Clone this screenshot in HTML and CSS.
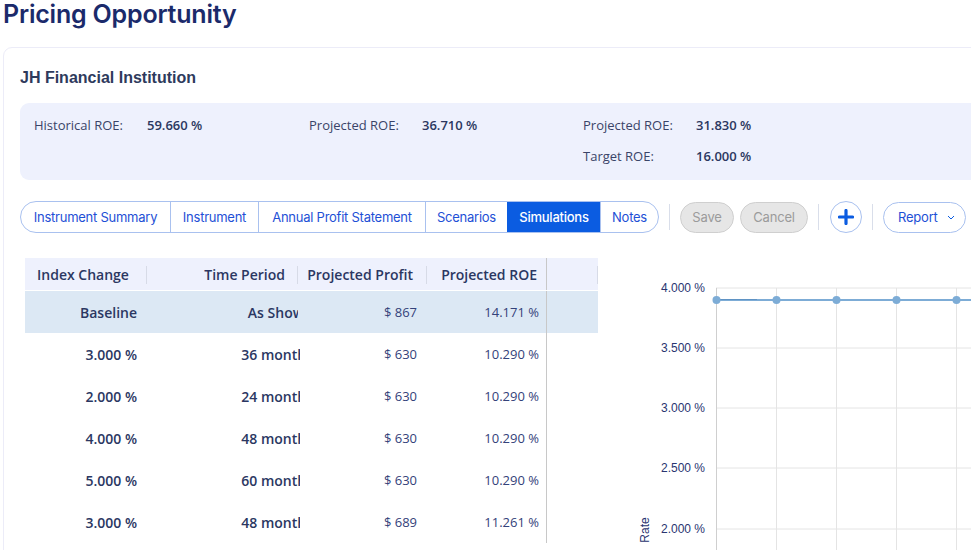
FILE: index.html
```html
<!DOCTYPE html>
<html lang="en">
<head>
<meta charset="utf-8">
<title>Pricing Opportunity</title>
<link rel="stylesheet" href="styles.css">
</head>
<body>
<h1 class="page-title">Pricing Opportunity</h1>
<section class="card">
  <h2 class="card-title">JH Financial Institution</h2>
  <div class="roe-panel">
    <div class="roe-col">
      <div class="roe-item"><span class="roe-label">Historical ROE:</span><span class="roe-value">59.660 %</span></div>
    </div>
    <div class="roe-col">
      <div class="roe-item"><span class="roe-label">Projected ROE:</span><span class="roe-value">36.710 %</span></div>
    </div>
    <div class="roe-col">
      <div class="roe-item"><span class="roe-label">Projected ROE:</span><span class="roe-value">31.830 %</span></div>
      <div class="roe-item"><span class="roe-label">Target ROE:</span><span class="roe-value">16.000 %</span></div>
    </div>
  </div>

  <div class="toolbar">
    <nav class="tabs">
      <span class="tab tab-summary">Instrument Summary</span>
      <span class="tab tab-instrument">Instrument</span>
      <span class="tab tab-annual">Annual Profit Statement</span>
      <span class="tab tab-scenarios">Scenarios</span>
      <span class="tab tab-sims active">Simulations</span>
      <span class="tab tab-notes">Notes</span>
    </nav>
    <span class="sep"></span>
    <button class="btn btn-disabled btn-save">Save</button>
    <button class="btn btn-disabled btn-cancel">Cancel</button>
    <span class="sep"></span>
    <button class="btn-round" aria-label="Add">
      <svg width="16" height="16" viewBox="0 0 16 16"><path d="M8 1.5v13M1.5 8h13" stroke="#0b5ce1" stroke-width="3.2" stroke-linecap="round"/></svg>
    </button>
    <span class="sep"></span>
    <button class="btn btn-outline">Report
      <svg class="chev" width="8" height="5" viewBox="0 0 8 5"><path d="M1 1l3 3 3-3" fill="none" stroke="#0b5ce1" stroke-width="1"/></svg>
    </button>
  </div>

  <div class="content">
    <div class="grid-table">
      <div class="th left">Index Change</div>
      <div class="th">Time Period</div>
      <div class="th">Projected Profit</div>
      <div class="th pin">Projected ROE</div>
      <div class="th last"></div>

      <div class="td b sel">Baseline</div>
      <div class="td b sel clip"><span>As Shown</span></div>
      <div class="td sel c3">$ 867</div>
      <div class="td sel pin c4">14.171 %</div>
      <div class="td sel last"></div>

      <div class="td b">3.000 %</div>
      <div class="td b clip"><span>36 months</span></div>
      <div class="td c3">$ 630</div>
      <div class="td pin c4">10.290 %</div>
      <div class="td last"></div>

      <div class="td b">2.000 %</div>
      <div class="td b clip"><span>24 months</span></div>
      <div class="td c3">$ 630</div>
      <div class="td pin c4">10.290 %</div>
      <div class="td last"></div>

      <div class="td b">4.000 %</div>
      <div class="td b clip"><span>48 months</span></div>
      <div class="td c3">$ 630</div>
      <div class="td pin c4">10.290 %</div>
      <div class="td last"></div>

      <div class="td b">5.000 %</div>
      <div class="td b clip"><span>60 months</span></div>
      <div class="td c3">$ 630</div>
      <div class="td pin c4">10.290 %</div>
      <div class="td last"></div>

      <div class="td b">3.000 %</div>
      <div class="td b clip"><span>48 months</span></div>
      <div class="td c3">$ 689</div>
      <div class="td pin c4">11.261 %</div>
      <div class="td last"></div>
    </div>

    <div class="chart">
      <svg width="373" height="292" viewBox="0 0 373 292">
        <g class="grid">
          <line x1="116" y1="30" x2="373" y2="30"/>
          <line x1="116" y1="90" x2="373" y2="90"/>
          <line x1="116" y1="150" x2="373" y2="150"/>
          <line x1="116" y1="210" x2="373" y2="210"/>
          <line x1="116" y1="271" x2="373" y2="271"/>
          <line x1="176.5" y1="30" x2="176.5" y2="292"/>
          <line x1="236.5" y1="30" x2="236.5" y2="292"/>
          <line x1="296.5" y1="30" x2="296.5" y2="292"/>
          <line x1="356.5" y1="30" x2="356.5" y2="292"/>
        </g>
        <line class="axis" x1="116.5" y1="30" x2="116.5" y2="292"/>
        <g class="ylabels">
          <text x="105" y="34">4.000 %</text>
          <text x="105" y="94">3.500 %</text>
          <text x="105" y="154">3.000 %</text>
          <text x="105" y="214">2.500 %</text>
          <text x="105" y="275">2.000 %</text>
        </g>
        <text class="axis-title" transform="translate(49 272) rotate(-90)">Rate</text>
        <line class="series" x1="116.5" y1="42" x2="373" y2="42"/>
        <line class="series-dark" x1="116.5" y1="41.5" x2="157" y2="41.5"/>
        <g class="points">
          <circle cx="116.5" cy="42" r="4"/>
          <circle cx="176.5" cy="42" r="4"/>
          <circle cx="236.5" cy="42" r="4"/>
          <circle cx="296.5" cy="42" r="4"/>
          <circle cx="356.5" cy="42" r="4"/>
        </g>
      </svg>
    </div>
  </div>
</section>
</body>
</html>
```

FILE: styles.css
```css
html, body {
  margin: 0;
  padding: 0;
  background: #ffffff;
  overflow: hidden;
}
body {
  width: 971px;
  height: 550px;
  font-family: "Open Sans", "Noto Sans", sans-serif;
  color: #2b3762;
}
.page-title {
  margin: 0;
  padding: 0 0 0 3px;
  font-family: Inter, "Noto Sans", sans-serif;
  font-weight: 600;
  font-size: 25px;
  line-height: 28px;
  letter-spacing: -0.2px;
  color: #1b2a6b;
  height: 47px;
}
.card {
  margin-left: 3px;
  width: 1000px;
  height: 520px;
  border: 1px solid #ececf8;
  border-radius: 9px;
  padding: 0 0 0 16px;
  box-sizing: border-box;
}
.card-title {
  margin: 0;
  padding-top: 20px;
  height: 55px;
  box-sizing: border-box;
  font-family: "Liberation Sans", Arial, sans-serif;
  font-size: 16px;
  font-weight: 700;
  line-height: 19px;
  color: #2e3a5c;
}
.roe-panel {
  display: grid;
  grid-template-columns: 275px 274px 300px;
  height: 77px;
  box-sizing: border-box;
  padding: 13px 0 0 14px;
  background: #eef1fd;
  border-radius: 9px;
}
.roe-col {
  display: flex;
  flex-direction: column;
  gap: 13px;
}
.roe-item {
  display: flex;
  font-size: 13px;
  line-height: 18px;
}
.roe-label {
  width: 113px;
  color: #3a4468;
}
.roe-value {
  font-weight: 600;
  color: #2b3760;
}

.toolbar {
  display: flex;
  align-items: center;
  margin-top: 21px;
  height: 32px;
  font-family: Inter, "Noto Sans", sans-serif;
  font-size: 13px;
}
.tabs {
  display: flex;
  height: 32px;
  box-sizing: border-box;
  border: 1px solid #a9c1ef;
  border-radius: 16px;
  overflow: hidden;
}
.tab {
  display: flex;
  align-items: center;
  justify-content: center;
  box-sizing: border-box;
  color: #1e50d6;
  border-left: 1px solid #a9c1ef;
  white-space: nowrap;
  letter-spacing: -0.25px;
}
.tab-summary { width: 149px; border-left: 0; }
.tab-instrument { width: 88px; }
.tab-annual { width: 167px; }
.tab-scenarios { width: 82px; }
.tab-sims { width: 93px; }
.tab-notes { width: 58px; }
.tab.active {
  background: #0b5ce1;
  color: #ffffff;
  border-left-color: #0b5ce1;
  font-weight: 500;
}
.sep {
  width: 1px;
  height: 26px;
  background: #d9deea;
  margin: 0 10px;
}
.btn {
  height: 31px;
  box-sizing: border-box;
  border-radius: 16px;
  font-family: Inter, "Noto Sans", sans-serif;
  font-size: 13px;
  letter-spacing: -0.2px;
  padding: 0 12px;
  display: flex;
  align-items: center;
}
.btn-disabled {
  background: #e6e6e6;
  border: 1px solid #cfcfcf;
  color: #9b9b9b;
}
.btn-save {
  width: 54px;
  justify-content: center;
  margin-right: 6px;
}
.btn-cancel {
  width: 68px;
  justify-content: center;
}
.btn-round {
  width: 32px;
  height: 32px;
  border-radius: 50%;
  border: 1px solid #a9c1ef;
  background: #ffffff;
  display: flex;
  align-items: center;
  justify-content: center;
  padding: 0;
  margin-left: 1px;
}
.btn-outline {
  background: #ffffff;
  border: 1px solid #a9c1ef;
  color: #1e50d6;
  width: 83px;
  padding: 0 0 0 14px;
  gap: 9px;
}
.chev {
  display: block;
}

.content {
  display: flex;
  margin-top: 25px;
}
.grid-table {
  margin-left: 5px;
  display: grid;
  grid-template-columns: 122px 151px 129px 120px 51px;
  grid-auto-rows: 42px;
  grid-template-rows: 33px;
  width: 573px;
  font-size: 14px;
}
.th {
  position: relative;
  background: #eef1fd;
  font-weight: 600;
  color: #2b3762;
  display: flex;
  align-items: center;
  justify-content: flex-end;
  padding-right: 13px;
  white-space: nowrap;
  border-bottom: 1px solid #ffffff;
}
.th.left {
  justify-content: flex-start;
  padding-left: 12px;
}
.th:nth-child(3) { padding-right: 14px; }
.th.pin { padding-right: 10px; }
.th::after {
  content: "";
  position: absolute;
  right: 0;
  top: 8px;
  width: 1px;
  height: 18px;
  background: #d7dbe7;
}
.th.pin::after {
  top: 0;
  height: 100%;
  background: #c8c8c8;
}
.td {
  display: flex;
  align-items: center;
  justify-content: flex-end;
  padding-right: 10px;
  white-space: nowrap;
  color: #34427a;
  font-size: 13px;
}
.td.b {
  font-weight: 600;
  font-size: 14px;
  color: #2b3762;
}
.td.clip {
  overflow: hidden;
  padding-right: 0;
  margin-right: -2px;
}
.td.clip span {
  flex-shrink: 0;
  margin-right: -13px;
}
.td.c3 { padding-right: 10px; }
.td.pin {
  padding-right: 7px;
  border-right: 1px solid #c8c8c8;
}
.td.sel { background: #dce8f4; }
.td.last { padding: 0; }

.chart {
  margin-left: 2px;
  margin-top: 0;
}
.chart svg { display: block; }
.grid line {
  stroke: #e4e4e4;
  stroke-width: 1;
}
.axis {
  stroke: #cfcfcf;
  stroke-width: 1;
}
.ylabels text {
  font-family: "Liberation Sans", Arial, sans-serif;
  font-size: 12px;
  fill: #2a3570;
  text-anchor: end;
}
.axis-title {
  font-family: "Liberation Sans", Arial, sans-serif;
  font-size: 12px;
  fill: #2a3570;
  text-anchor: middle;
}
.series {
  stroke: #7dacd6;
  stroke-width: 2;
}
.series-dark {
  stroke: #5f93c4;
  stroke-width: 1;
}
.points circle {
  fill: #7dacd6;
}
```
